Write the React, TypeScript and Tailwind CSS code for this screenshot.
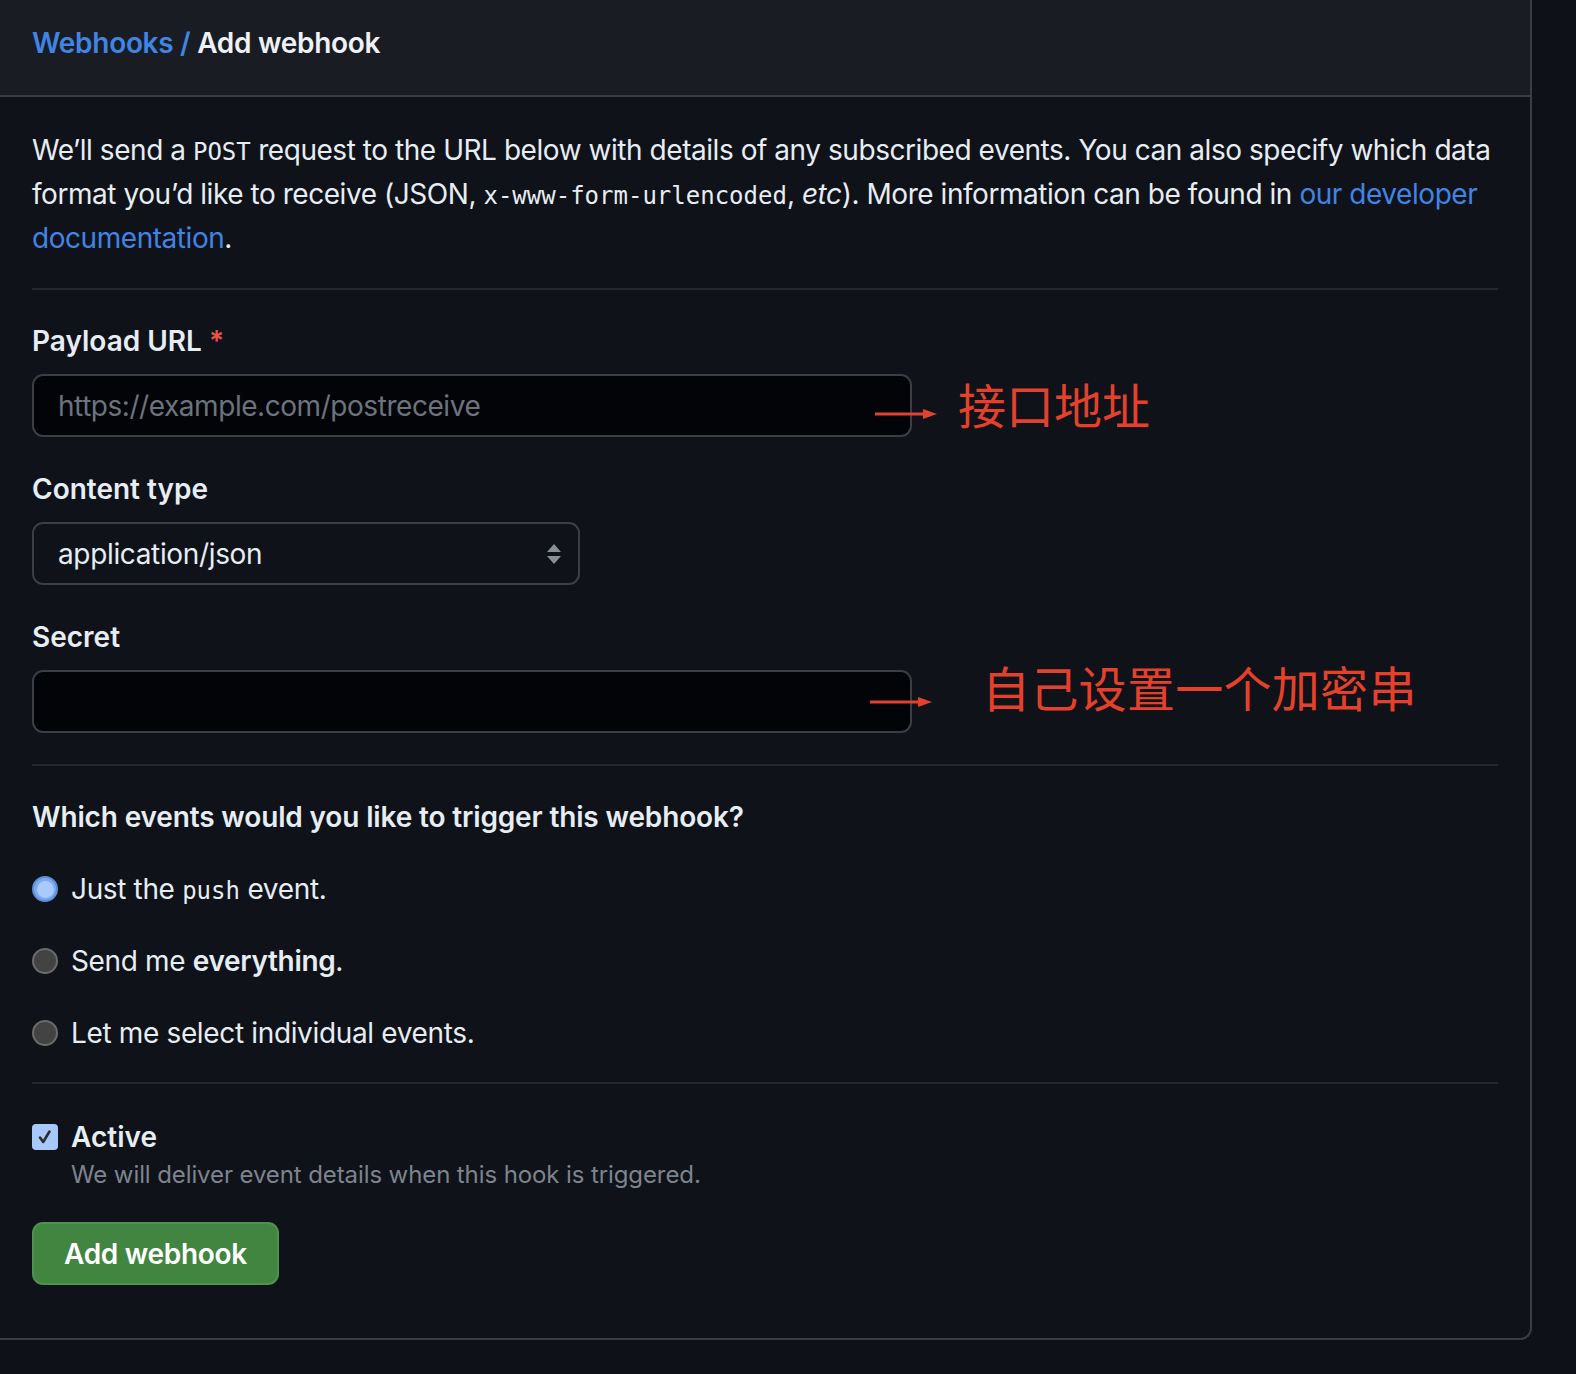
import React from "react";

const sans = { fontFamily: "Inter, 'Noto Sans', 'Liberation Sans', sans-serif" };
const mono = { fontFamily: "'DejaVu Sans Mono', monospace" };
const cjk = { fontFamily: "'Noto Sans CJK SC', sans-serif" };

function Radio({ checked }: { checked?: boolean }) {
  if (checked) {
    return (
      <span className="flex h-[26px] w-[26px] shrink-0 items-center justify-center rounded-full border-2 border-[#5f8ed8] bg-[#7fa9ec]">
        <span className="h-[17px] w-[17px] rounded-full bg-[#a8caff]" />
      </span>
    );
  }
  return <span className="h-[26px] w-[26px] shrink-0 rounded-full border-2 border-[#6b6b6b] bg-[#434343]" />;
}

function Arrow() {
  return (
    <svg width="62" height="12" viewBox="0 0 62 12">
      <line x1="0" y1="6" x2="50" y2="6" stroke="#e4412c" strokeWidth="3" />
      <polygon points="48,1 62,6 48,11" fill="#e4412c" />
    </svg>
  );
}

export default function App() {
  return (
    <div className="min-h-[1374px] w-full bg-[#0e1117] text-[#e6edf3]" style={sans}>
      <div className="w-[1532px] rounded-br-[12px] border-r-2 border-b-2 border-[#393d44] bg-[#0f1218]">
        <div className="flex h-[97px] items-center border-b-2 border-[#393d44] bg-[#191c23] pl-[32px] pb-[9px]">
          <h2 className="text-[28px] font-semibold leading-none tracking-[-0.3px]">
            <span className="text-[#4184e4]">Webhooks /</span> <span className="text-[#eef1f6]">Add webhook</span>
          </h2>
        </div>
        <div className="px-[32px] pt-[32px] pb-[53px]">
          <p className="text-[28px] leading-[42px] tracking-[-0.45px]">
            We’ll send a <code className="text-[24px] tracking-normal" style={mono}>POST</code> request to the URL below with details of any subscribed events. You can also specify which data format you’d like to receive (JSON, <code className="text-[24px] tracking-normal" style={mono}>x-www-form-urlencoded</code>, <em>etc</em>). More information can be found in <a className="text-[#4184e4]">our developer documentation</a>.
          </p>
          <div className="mt-[29px] h-[2px] w-full bg-[#23272e]" />

          <div className="mt-[30px] text-[28px] font-semibold leading-[42px]">
            Payload URL <span className="text-[#e5534b]">*</span>
          </div>
          <div className="relative mt-[12px] h-[63px] w-[880px]">
            <div className="flex h-full w-full items-center rounded-[11px] border-2 border-[#3a3e45] bg-[#030408] pl-[24px] text-[28px] tracking-[-0.45px] text-[#6c737d]">
              https://example.com/postreceive
            </div>
            <div className="absolute left-[843px] top-[34px]">
              <Arrow />
            </div>
            <div className="absolute left-[926px] top-[-3px] whitespace-nowrap text-[48px] leading-[64px] text-[#e4412c]" style={cjk}>
              接口地址
            </div>
          </div>

          <div className="mt-[31px] text-[28px] font-semibold leading-[42px]">Content type</div>
          <div className="mt-[12px] flex h-[63px] w-[548px] items-center justify-between rounded-[11px] border-2 border-[#3a3e45] bg-[#0f1218] pl-[24px] pr-[16px] text-[28px] tracking-[-0.35px]">
            <span>application/json</span>
            <svg width="16" height="22" viewBox="0 0 16 22">
              <polygon points="8,1 15,9 1,9" fill="#8a8f97" />
              <polygon points="1,13 15,13 8,21" fill="#8a8f97" />
            </svg>
          </div>

          <div className="mt-[31px] text-[28px] font-semibold leading-[42px]">Secret</div>
          <div className="relative mt-[12px] h-[63px] w-[880px]">
            <div className="h-full w-full rounded-[11px] border-2 border-[#3a3e45] bg-[#030408]" />
            <div className="absolute left-[838px] top-[26px]">
              <Arrow />
            </div>
            <div className="absolute left-[950px] top-[-16px] whitespace-nowrap text-[48px] leading-[64px] tracking-[0.3px] text-[#e4412c]" style={cjk}>
              自己设置一个加密串
            </div>
          </div>

          <div className="mt-[31px] h-[2px] w-full bg-[#23272e]" />

          <div className="mt-[30px] text-[28px] font-semibold leading-[42px] tracking-[-0.15px]">Which events would you like to trigger this webhook?</div>

          <div className="mt-[30px] flex flex-col gap-[30px] tracking-[-0.35px]">
            <label className="flex h-[42px] items-center gap-[13px] text-[28px]">
              <Radio checked />
              <span>
                Just the <code className="text-[24px] tracking-normal" style={mono}>push</code> event.
              </span>
            </label>
            <label className="flex h-[42px] items-center gap-[13px] text-[28px]">
              <Radio />
              <span>
                Send me <strong className="font-semibold">everything</strong>.
              </span>
            </label>
            <label className="flex h-[42px] items-center gap-[13px] text-[28px]">
              <Radio />
              <span>Let me select individual events.</span>
            </label>
          </div>

          <div className="mt-[28px] h-[2px] w-full bg-[#23272e]" />

          <div className="mt-[32px] flex items-center gap-[13px]">
            <span className="flex h-[26px] w-[26px] items-center justify-center rounded-[4px] bg-[#a8c8fb]">
              <svg width="18" height="18" viewBox="0 0 18 18">
                <path d="M4 9.5 L7.2 14 L13.5 3.5" stroke="#2d2d2d" strokeWidth="2.6" fill="none" strokeLinecap="round" strokeLinejoin="round" />
              </svg>
            </span>
            <span className="text-[28px] font-semibold leading-[42px]">Active</span>
          </div>
          <div className="ml-[39px] mt-[-1px] text-[24px] leading-[36px] tracking-[-0.1px] text-[#7d848e]">
            We will deliver event details when this hook is triggered.
          </div>

          <button className="mt-[29px] flex h-[63px] items-center rounded-[11px] border-2 border-[#4e9150] bg-[#428541] px-[30px] text-[28px] font-semibold tracking-[-0.3px] text-white">
            Add webhook
          </button>
        </div>
      </div>
    </div>
  );
}
